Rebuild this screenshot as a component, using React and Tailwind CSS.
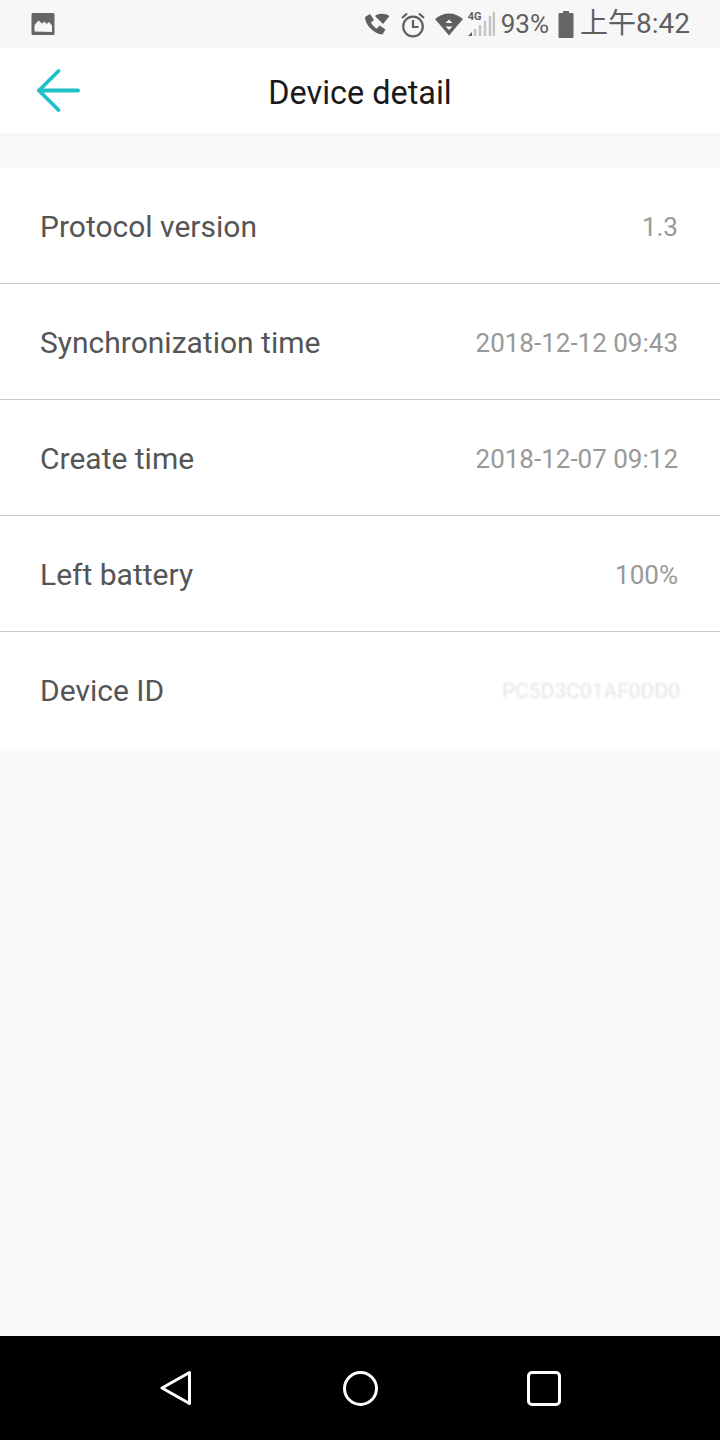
import { ArrowLeft } from 'lucide-react';

const rows = [
  { label: 'Protocol version', value: '1.3' },
  { label: 'Synchronization time', value: '2018-12-12 09:43' },
  { label: 'Create time', value: '2018-12-07 09:12' },
  { label: 'Left battery', value: '100%' },
  { label: 'Device ID', value: 'PC5D3C01AF0DD0', hidden: true },
];

function StatusBar() {
  return (
    <div className="h-[48px] bg-[#f7f7f7] flex items-center justify-between pl-[31px] pr-[30px] text-[#5f5f5f]">
      <svg width="24" height="24" viewBox="0 0 24 24">
        <rect x="0.5" y="1" width="23" height="22" rx="1.5" fill="#666" />
        <path d="M3.500 19.500V13l4-4.500 3.500 3 2.500-2 2 2.500 2.500-2 3 3.500v6.500z" fill="#f7f7f7" />
      </svg>
      <div className="flex items-center">
        <svg width="26" height="26" viewBox="0 0 26 26" className="mr-[11px]">
          <path d="M1 6l5-3 4 6-3 2.500c1 2.500 3.500 5 6 6l2.500-3 6 4-3 5C10 23 1 14 1 6z" fill="#5f5f5f" />
          <path d="M11 5c3.500-3 10-3 14.500 0L19 13z" fill="#5f5f5f" />
        </svg>
        <svg width="24" height="27" viewBox="0 0 24 27" fill="none" stroke="#5f5f5f" strokeWidth="2.200" className="mr-[10px]">
          <circle cx="12" cy="15.500" r="9.800" />
          <path d="M12 9v7h5.500M1 7l5-4.500M23 7l-5-4.500" />
        </svg>
        <svg width="28" height="23" viewBox="0 0 28 23" className="mr-[5px]">
          <path d="M0 6c8-7.500 20-7.500 28 0L14 22.500z" fill="#5f5f5f" />
          <path d="M14 6.500l3.500 3.500h-7zM14 17l-3.500-3.500h7z" fill="#f7f7f7" />
        </svg>
        <div className="relative w-[27px] h-[26px] mr-[6px]">
          <span className="absolute left-[0px] top-[0px] text-[11px] font-bold leading-[11px] text-[#5f5f5f] font-['Roboto',sans-serif]">4G</span>
          <svg width="27" height="26" viewBox="0 0 27 26" className="absolute left-0 top-0">
            <path d="M0 25l4-4v4z" fill="#5f5f5f" />
            <path d="M7 25v-7M12 25v-11M17 25v-15M22 25v-20M26 25V1" stroke="#c4c4c4" strokeWidth="2.500" fill="none" />
          </svg>
        </div>
        <span className="text-[26px] leading-none font-['Roboto',sans-serif] mr-[9px]">93%</span>
        <svg width="16" height="27" viewBox="0 0 16 27" className="mr-[6px]">
          <path d="M5 0h6v2h3.500a1 1 0 0 1 1 1v23a1 1 0 0 1-1 1h-13a1 1 0 0 1-1-1V3a1 1 0 0 1 1-1H5z" fill="#666" />
        </svg>
        <span className="text-[28px] leading-none font-['Roboto','Noto_Sans_CJK_TC',sans-serif]">上午8:42</span>
      </div>
    </div>
  );
}

function Row({ label, value, hidden, last }) {
  return (
    <div className={`h-[116px] flex items-center justify-between pt-[3px] pl-[40px] pr-[42px] bg-white ${last ? '' : 'border-b border-[#c8c8c8]'}`}>
      <span className="text-[30px] mb-[2px] text-[#555555]">{label}</span>
      {hidden ? (
        <span className="text-[21px] mr-[-2px] text-[#e4e4e4] blur-[0.8px]">{value}</span>
      ) : (
        <span className="text-[26px] text-[#999999]">{value}</span>
      )}
    </div>
  );
}

export default function App() {
  return (
    <div className="w-[720px] h-[1440px] flex flex-col bg-[#fafafa] font-['Roboto',sans-serif]">
      <StatusBar />
      <div className="relative h-[85px] pt-[5px] bg-white flex items-center justify-center shrink-0">
        <ArrowLeft className="absolute left-[25px] top-[9px] text-[#1fc0c8]" size={67} strokeWidth={1.35} />
        <span className="text-[32.4px] text-[#1a1a1a]">Device detail</span>
      </div>
      <div className="h-[35px] bg-[#f8f8f8] shrink-0" />
      <div className="flex flex-col">
        {rows.map((r, i) => (
          <Row key={r.label} {...r} last={i === rows.length - 1} />
        ))}
      </div>
      <div className="flex-1" />
      <div className="h-[104px] bg-black flex items-center justify-center shrink-0">
        <div className="w-[720px] flex items-center justify-between pl-[160px] pr-[159px]">
          <svg width="32" height="36" viewBox="0 0 32 36" fill="none" stroke="white" strokeWidth="3" strokeLinejoin="round">
            <path d="M29.500 2.500v31L2 18z" />
          </svg>
          <div className="w-[35px] h-[35px] ml-[1px] rounded-full border-[3px] border-white" />
          <div className="w-[34px] h-[35px] rounded-[5px] border-[3px] border-white" />
        </div>
      </div>
    </div>
  );
}
